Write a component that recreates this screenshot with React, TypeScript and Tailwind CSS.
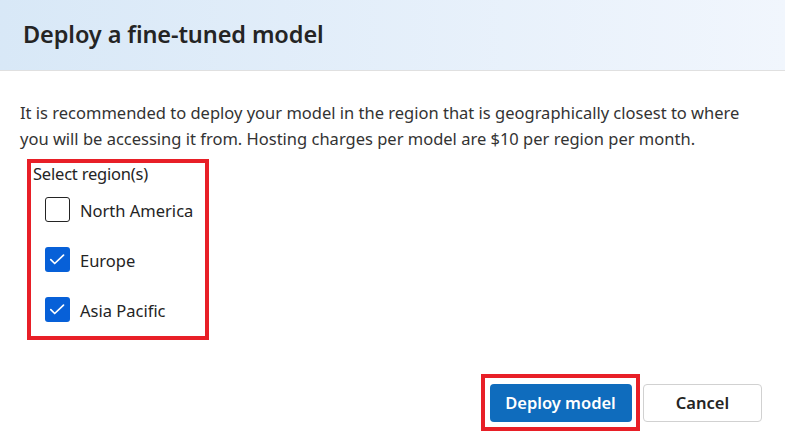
import { useState } from 'react'

type Region = { id: string; label: string }

const regions: Region[] = [
  { id: 'na', label: 'North America' },
  { id: 'eu', label: 'Europe' },
  { id: 'ap', label: 'Asia Pacific' },
]

function CheckBox({ checked }: { checked: boolean }) {
  return checked ? (
    <span className="flex h-[25px] w-[25px] items-center justify-center rounded-[3px] bg-[#0760d8]">
      <svg width="25" height="25" viewBox="0 0 25 25" fill="none">
        <path d="M5.8 12.6l3.9 3.9 8.8-8.3" stroke="white" strokeWidth="1.7" strokeLinecap="round" strokeLinejoin="round" />
      </svg>
    </span>
  ) : (
    <span className="block h-[25px] w-[25px] rounded-[3px] border border-[#242424] bg-white" />
  )
}

export default function App() {
  const [selected, setSelected] = useState<Record<string, boolean>>({ na: false, eu: true, ap: true })

  return (
    <div className="flex h-[444px] w-[785px] flex-col bg-white text-[#242424] font-['Noto_Sans',sans-serif]">
      {/* header */}
      <div className="flex h-[71px] items-center border-b border-[#e0e0e0] bg-gradient-to-r from-[#d8e8f7] to-[#f1f6fd] px-[23px]">
        <h1 className="text-[23.5px] font-semibold tracking-[-0.1px]">Deploy a fine-tuned model</h1>
      </div>

      <div className="flex flex-1 flex-col px-5">
        <p className="mt-[29px] text-[16.5px] leading-[26px] text-[#333]">
          It is recommended to deploy your model in the region that is geographically closest to where
          <br />
          you will be accessing it from. Hosting charges per model are $10 per region per month.
        </p>

        <div className="ml-[7px] mt-[7px] h-[181px] w-[182px] border-4 border-[#e81f27] pl-[2px]">
          <div className="text-[16.5px] leading-[22px] tracking-[-0.2px]">Select region(s)</div>
          <div className="mt-[11px] flex flex-col gap-[23px] pl-[12px]">
            {regions.map(r => (
              <label
                key={r.id}
                className="flex h-[27px] cursor-pointer items-center gap-[10px]"
                onClick={() => setSelected(s => ({ ...s, [r.id]: !s[r.id] }))}
              >
                <CheckBox checked={selected[r.id]} />
                <span className="pt-[2px] text-[16.5px] leading-[25px]">{r.label}</span>
              </label>
            ))}
          </div>
        </div>

        <div className="mt-auto mb-[13px] flex items-center justify-end gap-[3px] pr-[3px]">
          <div className="flex h-[57px] w-[159px] items-center justify-center border-4 border-[#e81f27]">
            <button className="h-[38px] w-[142px] rounded-[4px] bg-[#0f6cbd] pt-[2px] text-[16.5px] font-semibold text-white">
              Deploy model
            </button>
          </div>
          <button className="h-[38px] w-[119px] rounded-[4px] border border-[#d1d1d1] bg-white pt-[2px] text-[16.5px] font-semibold">
            Cancel
          </button>
        </div>
      </div>
    </div>
  )
}
